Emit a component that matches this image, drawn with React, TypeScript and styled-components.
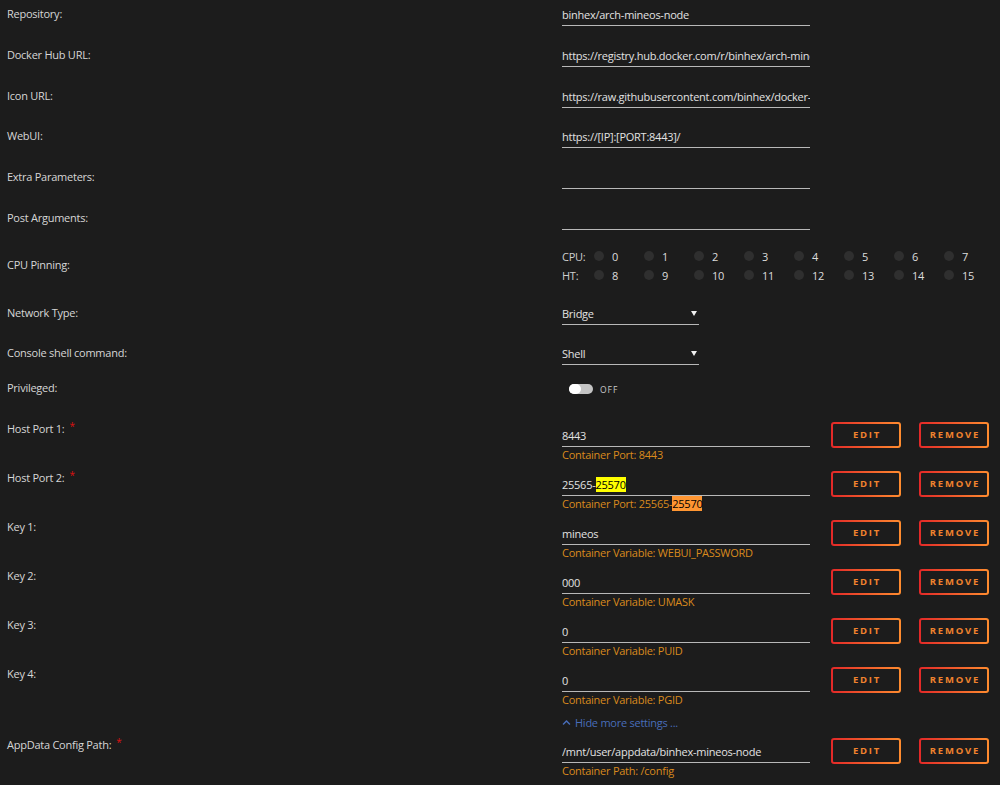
import React from "react";
import styled, { createGlobalStyle } from "styled-components";
import { FaChevronUp } from "react-icons/fa";

const BG = "#1c1c1c";
const ORANGE = "#d98a1c";

const GlobalStyle = createGlobalStyle`
  html, body {
    margin: 0;
    padding: 0;
    background: ${BG};
  }
  body {
    font-family: "Open Sans", "Noto Sans", sans-serif;
    font-size: 11px;
    letter-spacing: -0.25px;
    color: #d8d8d8;
  }
`;

const Form = styled.div`
  width: 1000px;
  height: 785px;
  overflow: hidden;
  display: flex;
  flex-direction: column;
  background: ${BG};
`;

const Row = styled.div<{ $h: number }>`
  display: flex;
  align-items: flex-start;
  height: ${(p) => p.$h}px;
  flex-shrink: 0;
`;

const Label = styled.div<{ $pt: number }>`
  width: 562px;
  box-sizing: border-box;
  padding-left: 7px;
  padding-top: ${(p) => p.$pt}px;
  height: 20px;
  line-height: 20px;
  color: #d6d6d6;
  flex-shrink: 0;
`;

const Req = styled.span`
  color: #d11;
  font-size: 10px;
  line-height: 0;
  margin-left: 5px;
  vertical-align: 3px;
`;

const Input = styled.div<{ $pt: number; $w: number }>`
  width: ${(p) => p.$w}px;
  margin-top: ${(p) => p.$pt}px;
  height: 21px;
  line-height: 21px;
  border-bottom: 1px solid #b8b8b8;
  color: #e2e2e2;
  white-space: nowrap;
  overflow: hidden;
`;

const Select = styled(Input)`
  display: flex;
  align-items: center;
  justify-content: space-between;
  padding-right: 2px;
  box-sizing: content-box;
  width: ${(p) => p.$w - 2}px;
`;

const Find = styled.span<{ $active?: boolean }>`
  background: ${(p) => (p.$active ? "#ff9632" : "#ffff00")};
  color: #000;
`;

const Field = styled.div`
  width: 248px;
  padding-top: 10px;
  display: flex;
  flex-direction: column;
`;

const Hint = styled.div`
  color: ${ORANGE};
  line-height: 16px;
  white-space: nowrap;
`;

const Actions = styled.div`
  display: flex;
  gap: 18px;
  margin-left: 21px;
  padding-top: 7px;
`;

const Button = styled.div`
  width: 70px;
  height: 26px;
  box-sizing: border-box;
  border: 2px solid transparent;
  border-radius: 3px;
  background:
    linear-gradient(${BG}, ${BG}) padding-box,
    linear-gradient(90deg, #e22828, #ff8c2f) border-box;
  display: flex;
  align-items: center;
  justify-content: center;
  font-size: 9.5px;
  font-weight: 700;
  letter-spacing: 1.8px;
  padding-left: 2px;
  color: #f0832e;
`;

const CpuGrid = styled.div`
  display: grid;
  grid-template-columns: 31px repeat(8, 50px);
  grid-auto-rows: 19px;
  padding-top: 2px;
  line-height: 19px;
`;

const CpuLabel = styled.div`
  color: #cfcfcf;
`;

const CpuCell = styled.div`
  display: flex;
  align-items: center;
  gap: 8px;
  color: #dcdcdc;
`;

const Dot = styled.span`
  width: 10px;
  height: 10px;
  border-radius: 50%;
  background: #2f2f2f;
  margin-left: 1px;
`;

const SwitchWrap = styled.div`
  display: flex;
  align-items: center;
  gap: 7px;
  padding-top: 10px;
  margin-left: 7px;
`;

const Track = styled.div`
  width: 24px;
  height: 10px;
  border-radius: 5px;
  background: #c4c4c4;
  display: flex;
  align-items: center;
`;

const Knob = styled.div`
  width: 12px;
  height: 10px;
  border-radius: 5px;
  background: #fff;
`;

const SwitchText = styled.span`
  font-size: 8.5px;
  letter-spacing: 1px;
  color: #c8c8c8;
`;

const MoreLink = styled.div`
  display: flex;
  align-items: center;
  gap: 4px;
  padding-top: 4px;
  line-height: 20px;
  color: #486dba;
`;

const Caret = () => (
  <svg width="6" height="5" viewBox="0 0 6 5">
    <path d="M0 0 H6 L3 5 Z" fill="#f0f0f0" />
  </svg>
);

interface TextField {
  label: string;
  value: string;
}

interface PortField {
  label: string;
  required?: boolean;
  value: React.ReactNode;
  hint: React.ReactNode;
}

const textFields: TextField[] = [
  { label: "Repository:", value: "binhex/arch-mineos-node" },
  {
    label: "Docker Hub URL:",
    value: "https://registry.hub.docker.com/r/binhex/arch-mineos-node/",
  },
  {
    label: "Icon URL:",
    value:
      "https://raw.githubusercontent.com/binhex/docker-templates/master/binhex/images/mineos-icon.png",
  },
  { label: "WebUI:", value: "https://[IP]:[PORT:8443]/" },
  { label: "Extra Parameters:", value: "" },
  { label: "Post Arguments:", value: "" },
];

const cpuRow = [0, 1, 2, 3, 4, 5, 6, 7];
const htRow = [8, 9, 10, 11, 12, 13, 14, 15];

const PortRow: React.FC<PortField> = ({ label, required, value, hint }) => (
  <Row $h={49}>
    <Label $pt={4}>
      {label}
      {required && <Req>*</Req>}
    </Label>
    <Field>
      <Input $pt={0} $w={248}>
        {value}
      </Input>
      <Hint>{hint}</Hint>
    </Field>
    <Actions>
      <Button>EDIT</Button>
      <Button>REMOVE</Button>
    </Actions>
  </Row>
);

export default function App() {
  const portFields: PortField[] = [
    {
      label: "Host Port 1:",
      required: true,
      value: "8443",
      hint: "Container Port: 8443",
    },
    {
      label: "Host Port 2:",
      required: true,
      value: (
        <>
          25565-<Find>25570</Find>
        </>
      ),
      hint: (
        <>
          Container Port: 25565-<Find $active>25570</Find>
        </>
      ),
    },
    { label: "Key 1:", value: "mineos", hint: "Container Variable: WEBUI_PASSWORD" },
    { label: "Key 2:", value: "000", hint: "Container Variable: UMASK" },
    { label: "Key 3:", value: "0", hint: "Container Variable: PUID" },
    { label: "Key 4:", value: "0", hint: "Container Variable: PGID" },
  ];

  return (
    <>
      <GlobalStyle />
      <Form>
        {textFields.map((f) => (
          <Row key={f.label} $h={40.8}>
            <Label $pt={4}>{f.label}</Label>
            <Input $pt={4} $w={248}>
              {f.value}
            </Input>
          </Row>
        ))}

        <Row $h={54}>
          <Label $pt={10}>CPU Pinning:</Label>
          <CpuGrid>
            <CpuLabel>CPU:</CpuLabel>
            {cpuRow.map((n) => (
              <CpuCell key={n}>
                <Dot />
                {n}
              </CpuCell>
            ))}
            <CpuLabel>HT:</CpuLabel>
            {htRow.map((n) => (
              <CpuCell key={n}>
                <Dot />
                {n}
              </CpuCell>
            ))}
          </CpuGrid>
        </Row>

        <Row $h={40}>
          <Label $pt={4}>Network Type:</Label>
          <Select $pt={4} $w={137}>
            Bridge
            <Caret />
          </Select>
        </Row>

        <Row $h={35}>
          <Label $pt={4}>Console shell command:</Label>
          <Select $pt={4} $w={137}>
            Shell
            <Caret />
          </Select>
        </Row>

        <Row $h={41}>
          <Label $pt={4}>Privileged:</Label>
          <SwitchWrap>
            <Track>
              <Knob />
            </Track>
            <SwitchText>OFF</SwitchText>
          </SwitchWrap>
        </Row>

        {portFields.map((f) => (
          <PortRow key={f.label} {...f} />
        ))}

        <Row $h={22}>
          <Label $pt={4} />
          <MoreLink>
            <FaChevronUp size={9} />
            Hide more settings ...
          </MoreLink>
        </Row>

        <PortRow
          label="AppData Config Path:"
          required
          value="/mnt/user/appdata/binhex-mineos-node"
          hint="Container Path: /config"
        />
      </Form>
    </>
  );
}
